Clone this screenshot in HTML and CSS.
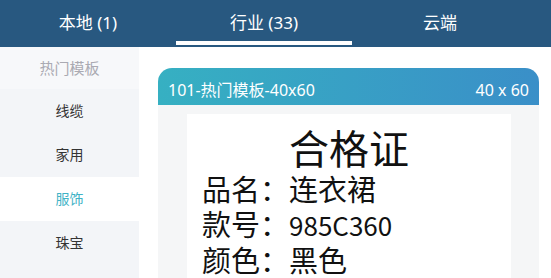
FILE: index.html
```html
<!DOCTYPE html>
<html lang="zh-CN">
<head>
    <meta charset="UTF-8">
    <title>模板</title>
    <link rel="stylesheet" href="styles.css">
</head>
<body>
    <div class="tabs">
        <div class="tab">本地 (1)</div>
        <div class="tab active">行业 (33)</div>
        <div class="tab">云端</div>
    </div>

    <div class="main">
        <ul class="side">
            <li class="side-title">热门模板</li>
            <li>线缆</li>
            <li>家用</li>
            <li class="selected">服饰</li>
            <li>珠宝</li>
        </ul>

        <div class="content">
            <div class="card">
                <div class="card-head">
                    <span>101-热门模板-40x60</span>
                    <span>40 x 60</span>
                </div>
                <div class="card-body">
                    <div class="label">
                        <div class="label-title">合格证</div>
                        <div class="label-line">品名：连衣裙</div>
                        <div class="label-line">款号：<span class="num">985C360</span></div>
                        <div class="label-line">颜色：黑色</div>
                    </div>
                </div>
            </div>
        </div>
    </div>
</body>
</html>
```

FILE: styles.css
```css
* {
    box-sizing: border-box;
}

body {
    margin: 0;
    width: 551px;
    height: 278px;
    overflow: hidden;
    background-color: white;
    font-family: "Noto Sans", "Noto Sans CJK SC", sans-serif;
}

.tabs {
    display: grid;
    grid-template-columns: 176px 176px 176px;
    height: 47px;
    background-color: #285880;
}

.tab {
    color: white;
    font-size: 17px;
    line-height: 17px;
    text-align: center;
    padding-top: 14px;
}

.tab.active {
    border-bottom: 4px solid white;
    margin-bottom: 2px;
}

.main {
    display: flex;
    height: 231px;
    overflow: hidden;
}

.side {
    list-style: none;
    margin: 0;
    padding: 0;
    width: 139px;
    background-color: #f3f5f8;
}

.side li {
    height: 44px;
    line-height: 44px;
    text-align: center;
    font-size: 14px;
    color: #333;
}

.side .side-title {
    height: 42px;
    line-height: 42px;
    font-size: 15px;
    color: #aaaab2;
    background-color: #f7f8fa;
}

.side .selected {
    background-color: white;
    color: #3fb3c6;
}

.content {
    flex: 1;
    padding: 21px 12px 0 19px;
}

.card {
    width: 381px;
}

.card-head {
    display: flex;
    justify-content: space-between;
    height: 37px;
    padding: 14px 10px 0 10px;
    font-size: 16px;
    line-height: 16px;
    color: white;
    border-radius: 14px 14px 0 0;
    background: linear-gradient(to right, #36b0c2, #3a8fc8);
}

.card-body {
    background-color: #f5f6f7;
    padding: 9px 28px 0 29px;
    height: 173px;
}

.label {
    background-color: white;
    height: 164px;
    overflow: hidden;
    padding: 9px 15px 0 15px;
    color: #111;
    font-family: "Noto Sans CJK SC", sans-serif;
}

.label-title {
    text-align: center;
    font-size: 40px;
    line-height: 48px;
}

.label-line {
    font-size: 29px;
    line-height: 35px;
}

.label-line .num {
    font-size: 26px;
}
```
